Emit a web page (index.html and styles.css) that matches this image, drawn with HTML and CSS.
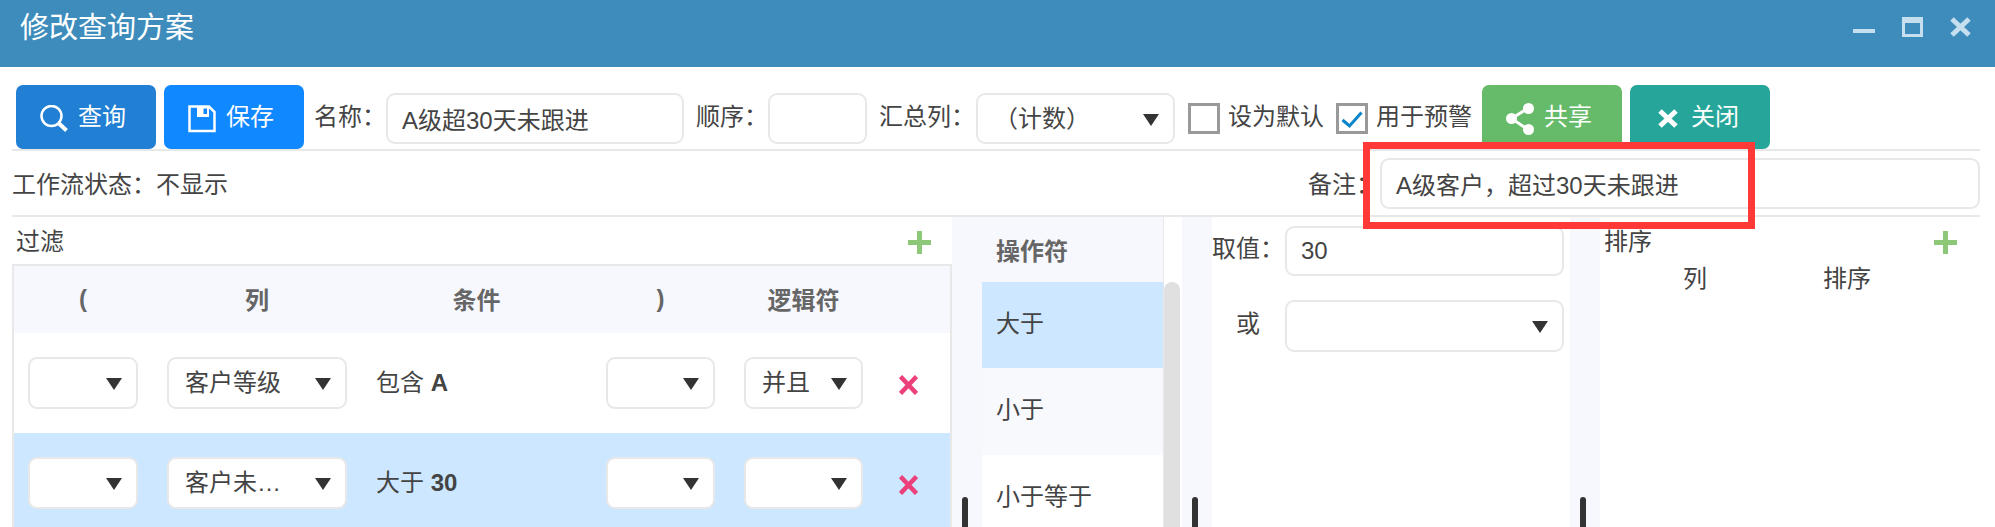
FILE: index.html
```html
<!DOCTYPE html>
<html lang="zh-CN">
  <head>
    <meta charset="UTF-8" />
    <title>修改查询方案</title>
    <link rel="stylesheet" href="styles.css">
  </head>
  <body>
    <div class="title-bar">
      <div class="title">修改查询方案</div>
      <div class="win-btns">
        <span class="win-min"></span>
        <span class="win-max"></span>
        <svg class="win-close" viewBox="0 0 21 20"><path d="M2 2 19 18M19 2 2 18" /></svg>
      </div>
    </div>

    <div class="toolbar">
      <div class="btn btn-query">
        <svg class="btn-icon" viewBox="0 0 28 28"><circle cx="11.5" cy="11" r="10" /><path class="thick" d="M19 18.5 26.5 25.5" /></svg>
        查询
      </div>
      <div class="btn btn-save">
        <svg class="btn-icon" viewBox="0 0 28 28"><path d="M1.5 1.5H21L26.5 7V26H1.5Z" /><path class="fill" d="M9 1.5H21V12H9ZM15.5 3.5V9H19V3.5Z" /></svg>
        保存
      </div>
      <label class="field-label lb-name">名称&#xFF1A;</label>
      <input class="input in-name" value="A级超30天未跟进" />
      <label class="field-label lb-order">顺序&#xFF1A;</label>
      <input class="input in-order" />
      <label class="field-label lb-sum">汇总列&#xFF1A;</label>
      <div class="select sel-sum"><span class="sel-text">（计数）</span><i class="arrow"></i></div>
      <span class="check"></span>
      <span class="check-label">设为默认</span>
      <span class="check">
        <svg viewBox="0 0 26 25"><path d="M3.5 14 10.5 20 22.5 6.5" /></svg>
      </span>
      <span class="check-label">用于预警</span>
      <div class="btn btn-share">
        <svg class="btn-icon" viewBox="0 0 28 32"><path class="line" d="M5.5 15.5 22.5 5M5.5 15.5 22.5 27" /><circle class="dot" cx="5.5" cy="15.5" r="5.5" /><circle class="dot" cx="22.5" cy="5.5" r="5.5" /><circle class="dot" cx="22.5" cy="26.5" r="5.5" /></svg>
        共享
      </div>
      <div class="btn btn-close">
        <svg class="btn-icon x-icon" viewBox="0 0 20 19"><path d="M2 2 18 17M18 2 2 17" /></svg>
        关闭
      </div>
    </div>

    <div class="info-row">
      <div class="flow-state">工作流状态&#xFF1A;不显示</div>
      <label class="remark-label">备注&#xFF1A;</label>
      <input class="input in-remark" value="A级客户&#xFF0C;超过30天未跟进" />
    </div>

    <!-- 红框标注 -->
    <div class="mark-box"></div>

    <div class="main">
      <div class="filter-panel">
        <div class="panel-head">
          <span>过滤</span>
          <svg class="plus" viewBox="0 0 23 23"><path d="M11.5 0V23M0 11.5H23" /></svg>
        </div>
        <div class="filter-table">
          <div class="f-row f-header">
            <div>(</div>
            <div>列</div>
            <div>条件</div>
            <div>)</div>
            <div>逻辑符</div>
            <div></div>
          </div>
          <div class="f-row">
            <div class="select"><i class="arrow"></i></div>
            <div class="select"><span class="sel-text">客户等级</span><i class="arrow"></i></div>
            <div class="cond">包含 <b>A</b></div>
            <div class="select"><i class="arrow"></i></div>
            <div class="select"><span class="sel-text">并且</span><i class="arrow"></i></div>
            <svg class="del" viewBox="0 0 19 20"><path d="M1.5 1.5 17.5 18.5M17.5 1.5 1.5 18.5" /></svg>
          </div>
          <div class="f-row f-active">
            <div class="select"><i class="arrow"></i></div>
            <div class="select"><span class="sel-text">客户未…</span><i class="arrow"></i></div>
            <div class="cond">大于 <b>30</b></div>
            <div class="select"><i class="arrow"></i></div>
            <div class="select"><i class="arrow"></i></div>
            <svg class="del" viewBox="0 0 19 20"><path d="M1.5 1.5 17.5 18.5M17.5 1.5 1.5 18.5" /></svg>
          </div>
        </div>
      </div>

      <div class="gutter"><span class="handle"></span></div>

      <div class="op-panel">
        <div class="op-head">操作符</div>
        <div class="op-item op-active">大于</div>
        <div class="op-item op-alt">小于</div>
        <div class="op-item">小于等于</div>
      </div>
      <div class="scroll-col"><div class="scroll-thumb"></div></div>

      <div class="gutter"><span class="handle"></span></div>

      <div class="value-panel">
        <div class="value-row">
          <label class="value-label">取值&#xFF1A;</label>
          <input class="input in-value" value="30" />
        </div>
        <div class="value-row">
          <label class="value-label or-label">或</label>
          <div class="select sel-value"><i class="arrow"></i></div>
        </div>
      </div>

      <div class="gutter"><span class="handle"></span></div>

      <div class="sort-panel">
        <div class="panel-head sort-head">
          <span>排序</span>
          <svg class="plus" viewBox="0 0 23 23"><path d="M11.5 0V23M0 11.5H23" /></svg>
        </div>
        <div class="sort-cols">
          <span class="sort-col">列</span>
          <span class="sort-order">排序</span>
        </div>
      </div>
    </div>
  </body>
</html>
```

FILE: styles.css
```css
* {
  box-sizing: border-box;
}

body {
  margin: 0;
  height: 527px;
  overflow: hidden;
  position: relative;
  background: #fff;
  color: #444;
  font-family: "Liberation Sans", "Noto Sans CJK SC", sans-serif;
  font-size: 24px;
}

/* 标题栏 */
.title-bar {
  display: flex;
  justify-content: space-between;
  height: 67px;
  padding: 10px 24px 10px 20px;
  background: #3d8cbc;
  color: #fff;
}

.title {
  font-size: 29px;
  line-height: 36px;
}

.win-btns {
  display: flex;
  align-items: flex-start;
  margin-top: 7px;
}

.win-min {
  width: 22px;
  height: 4px;
  margin-top: 12px;
  background: #c5dfee;
}

.win-max {
  width: 21px;
  height: 20px;
  margin-left: 27px;
  border: 3px solid #c5dfee;
  border-top-width: 6px;
}

.win-close {
  width: 21px;
  height: 20px;
  margin-left: 27px;
}

.win-close path {
  fill: none;
  stroke: #c5dfee;
  stroke-width: 5;
}

/* 工具栏 */
.toolbar {
  display: flex;
  align-items: flex-start;
  height: 84px;
  margin: 0 15px 0 12px;
  padding: 18px 0 0 4px;
  border-bottom: 2px solid #e8e8e8;
}

.btn {
  display: flex;
  align-items: center;
  gap: 10px;
  width: 140px;
  height: 64px;
  padding: 0 0 6px 24px;
  border-radius: 7px;
  color: #fff;
  font-size: 24px;
}

.btn-query {
  background: #2180d4;
}

.btn-save {
  margin-left: 8px;
  background: #1088ff;
}

.btn-share {
  margin-left: 10px;
  background: #66bb6a;
}

.btn-close {
  margin-left: 8px;
  background: #26a69a;
}

.btn-icon {
  width: 28px;
  height: 28px;
  margin-top: 9px;
  flex: none;
  fill: none;
  stroke: #fff;
  stroke-width: 2.5;
}

.btn-icon .thick {
  stroke-width: 4;
}

.btn-icon .fill {
  fill: #fff;
  fill-rule: evenodd;
  stroke: none;
}

.btn-share .btn-icon {
  height: 32px;
}

.btn-icon .line {
  stroke-width: 3;
}

.btn-icon .dot {
  fill: #fff;
  stroke: none;
}

.x-icon {
  width: 20px;
  height: 19px;
  margin: 9px 3px 0 4px;
  stroke-width: 5;
}

.field-label {
  margin-top: 14px;
  line-height: 36px;
  white-space: nowrap;
}

.lb-name {
  width: 72px;
  margin-left: 10px;
}

.lb-order {
  width: 72px;
  margin-left: 12px;
}

.lb-sum {
  width: 97px;
  margin-left: 12px;
}

.input {
  height: 51px;
  padding: 0 14px;
  border: 2px solid #e8e8e8;
  border-radius: 9px;
  background: #fff;
  color: #444;
  font: inherit;
  outline: none;
}

.toolbar .input {
  margin-top: 8px;
}

.in-name {
  width: 298px;
}

.in-order {
  width: 99px;
}

.select {
  position: relative;
  display: flex;
  align-items: center;
  height: 52px;
  padding: 0 0 5px 16px;
  border: 2px solid #e8e8e8;
  border-radius: 9px;
  background: #fff;
}

.toolbar .select {
  margin-top: 8px;
  height: 51px;
}

.sel-sum {
  width: 199px;
}

.sel-text {
  white-space: nowrap;
}

.arrow {
  position: absolute;
  top: 50%;
  right: 14px;
  margin-top: -5px;
  border-style: solid;
  border-width: 12px 8px 0;
  border-color: #333 transparent transparent;
}

.check {
  flex: none;
  width: 32px;
  height: 31px;
  margin-top: 18px;
  margin-left: 13px;
  border: 3px solid #999;
}

.check-label + .check {
  margin-left: 12px;
}

.check svg {
  display: block;
  width: 100%;
  height: 100%;
  fill: none;
  stroke: #0a85c9;
  stroke-width: 3;
}

.check-label {
  margin: 14px 0 0 8px;
  line-height: 36px;
  white-space: nowrap;
}

/* 第二行 */
.info-row {
  display: flex;
  align-items: center;
  height: 66px;
  margin: 0 15px 0 12px;
  border-bottom: 2px solid #e8e8e8;
}

.flow-state {
  width: 1296px;
  padding-bottom: 2px;
  white-space: nowrap;
}

.remark-label {
  width: 72px;
  padding-bottom: 2px;
  white-space: nowrap;
}

.in-remark {
  width: 600px;
}

.mark-box {
  position: absolute;
  top: 142px;
  left: 1363px;
  width: 392px;
  height: 87px;
  border: 7px solid #ff3838;
}

/* 下方面板 */
.main {
  display: flex;
  height: 310px;
  margin-left: 12px;
}

.filter-panel {
  width: 940px;
  flex: none;
}

.panel-head {
  display: flex;
  justify-content: space-between;
  align-items: center;
  height: 47px;
  padding: 0 21px 2px 4px;
}

.plus {
  width: 23px;
  height: 23px;
  margin-top: 5px;
}

.plus path {
  fill: none;
  stroke: #8cc878;
  stroke-width: 5;
}

.filter-table {
  border: 2px solid #e8e8e8;
  border-bottom: 0;
}

.f-row {
  display: grid;
  grid-template-columns: 110px 180px 201px 109px 119px 36px;
  column-gap: 29px;
  align-items: center;
  height: 100px;
  padding-left: 14px;
}

.f-header {
  height: 67px;
  padding-bottom: 2px;
  background: #f6f8fd;
  color: #666;
  font-weight: bold;
  text-align: center;
}

.f-active {
  background: #cce7ff;
}

.cond {
  margin-bottom: 6px;
  white-space: nowrap;
}

.del {
  width: 19px;
  height: 20px;
  margin: 4px 0 0 7px;
  fill: none;
  stroke: #ec407a;
  stroke-width: 4.5;
}

.gutter {
  display: flex;
  align-items: flex-end;
  flex: none;
  width: 30px;
  padding-left: 10px;
  background: #f6f8fd;
}

.handle {
  width: 6px;
  height: 30px;
  border-radius: 3px 3px 0 0;
  background: #333;
}

.op-panel {
  flex: none;
  width: 182px;
  border-right: 1px solid #e8e8e8;
}

.op-head {
  height: 65px;
  padding: 13px 14px 0;
  background: #f6f8fd;
  color: #666;
  font-weight: bold;
  line-height: 44px;
}

.op-item {
  height: 86px;
  padding: 0 14px;
  line-height: 84px;
}

.op-active {
  background: #cce7ff;
}

.op-alt {
  height: 87px;
  background: #f8f9fc;
}

.scroll-col {
  flex: none;
  width: 18px;
  padding: 65px 2px 0 0;
}

.scroll-thumb {
  height: 100%;
  border-radius: 8px 8px 0 0;
  background: #e0e0e0;
}

.value-panel {
  flex: none;
  width: 358px;
  padding-top: 9px;
}

.value-row {
  display: flex;
  align-items: center;
  height: 50px;
  margin-bottom: 25px;
}

.value-label {
  width: 73px;
  margin-bottom: 10px;
}

.or-label {
  padding-left: 24px;
}

.in-value {
  width: 279px;
  height: 50px;
}

.sel-value {
  width: 279px;
}

.sort-panel {
  flex: 1;
}

.sort-head {
  padding-right: 38px;
}

.sort-cols {
  display: flex;
  line-height: 30px;
}

.sort-col {
  margin-left: 83px;
}

.sort-order {
  margin-left: 116px;
}
```
